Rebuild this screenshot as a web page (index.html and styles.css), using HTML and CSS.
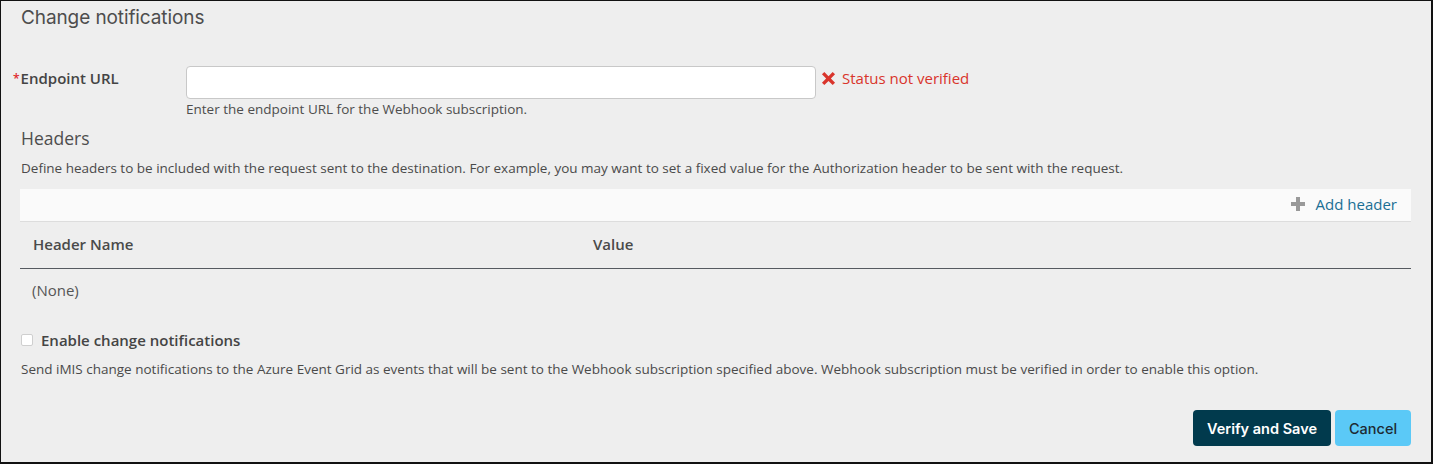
FILE: index.html
```html
<!DOCTYPE html>
<html>
<head>
<meta charset="utf-8">
<link rel="stylesheet" href="styles.css">
</head>
<body>
<div class="frame">
  <h1 class="title">Change notifications</h1>

  <div class="field-row">
    <label class="field-label"><span class="req">*</span>Endpoint URL</label>
    <div class="field-body">
      <div class="input-line">
        <input class="text-input" type="text">
        <span class="status">
          <svg class="x-icon" viewBox="0 0 16 16" width="16" height="16"><path d="M2.5 4.5 L4.5 2.5 L8 6 L11.5 2.5 L13.5 4.5 L10 8 L13.5 11.5 L11.5 13.5 L8 10 L4.5 13.5 L2.5 11.5 L6 8 Z" fill="#d9342b"/></svg>
          Status not verified
        </span>
      </div>
      <div class="help">Enter the endpoint URL for the Webhook subscription.</div>
    </div>
  </div>

  <h2 class="section">Headers</h2>
  <p class="desc">Define headers to be included with the request sent to the destination. For example, you may want to set a fixed value for the Authorization header to be sent with the request.</p>

  <div class="toolbar">
    <a class="add-link">
      <svg class="plus" viewBox="0 0 14 14" width="14" height="14"><path d="M5 0h4v5h5v4H9v5H5V9H0V5h5z" fill="#999"/></svg>
      Add header
    </a>
  </div>

  <table class="grid">
    <thead>
      <tr><th class="col-name">Header Name</th><th>Value</th></tr>
    </thead>
    <tbody>
      <tr><td colspan="2" class="none">(None)</td></tr>
    </tbody>
  </table>

  <label class="check-row">
    <span class="checkbox"></span>
    <span class="check-label">Enable change notifications</span>
  </label>
  <p class="desc desc2">Send iMIS change notifications to the Azure Event Grid as events that will be sent to the Webhook subscription specified above. Webhook subscription must be verified in order to enable this option.</p>

  <div class="actions">
    <button class="btn btn-primary">Verify and Save</button>
    <button class="btn btn-secondary">Cancel</button>
  </div>
</div>
</body>
</html>
```

FILE: styles.css
```css
* { box-sizing: border-box; }
html, body { margin: 0; padding: 0; }
body {
  width: 1433px;
  height: 464px;
  font-family: "Open Sans", "Liberation Sans", sans-serif;
  color: #4a4a4a;
}
.frame {
  width: 1433px;
  height: 464px;
  background: #eeeeee;
  border: 1px solid #111;
  border-right-width: 2px;
  border-bottom-width: 2px;
  padding: 0 20px 0 19px;
  overflow: hidden;
}
.title {
  font-family: Inter, "Liberation Sans", sans-serif;
  font-weight: 400;
  font-size: 19px;
  line-height: 24px;
  color: #4d4d4d;
  margin: 5px 0 0 1px;
  letter-spacing: -0.1px;
}
.field-row {
  display: flex;
  margin-top: 36px;
}
.field-label {
  width: 166px;
  font-weight: 600;
  font-size: 15px;
  line-height: 20px;
  color: #444;
  padding-top: 2px;
  margin-left: -7px;
  margin-right: 7px;
}
.req {
  color: #e0262b;
  font-size: 12px;
  margin-right: 1px;
  vertical-align: 1px;
}
.field-body { display: flex; flex-direction: column; }
.input-line { display: flex; align-items: center; }
.text-input {
  width: 630px;
  height: 33px;
  background: #fff;
  border: 1px solid #c8c8c8;
  border-radius: 4px;
  margin: 0;
  font: inherit;
}
.status {
  display: flex;
  align-items: center;
  gap: 4px;
  margin-left: 3px;
  color: #d9342b;
  font-size: 15px;
  line-height: 20px;
  margin-top: -9px;
}
.x-icon { display: block; width: 19px; height: 19px; }
.help {
  font-size: 13.5px;
  line-height: 18px;
  color: #4d4d4d;
  margin-top: 1px;
}
.section {
  font-family: "Open Sans", "Liberation Sans", sans-serif;
  font-weight: 400;
  font-size: 17.5px;
  line-height: 22px;
  color: #4d4d4d;
  margin: 9px 0 0 1px;
}
.desc {
  font-size: 13.5px;
  line-height: 18px;
  color: #4a4a4a;
  margin: 10px 0 0 1px;
}
.toolbar {
  display: flex;
  justify-content: flex-end;
  align-items: center;
  height: 33px;
  background: #fafafa;
  border-bottom: 1px solid #dddddd;
  margin-top: 12px;
  padding-right: 14px;
}
.add-link {
  display: flex;
  align-items: center;
  gap: 11px;
  color: #1b6f94;
  font-size: 15px;
  line-height: 20px;
  margin-top: -3px;
}
.plus { display: block; }
.grid {
  width: 100%;
  border-collapse: collapse;
  margin-top: 0;
}
.grid th {
  text-align: left;
  font-weight: 600;
  font-size: 15px;
  line-height: 20px;
  color: #4a4a4a;
  height: 46px;
  padding: 0 12px 1px;
  border-bottom: 1px solid #555a60;
}
.grid th.col-name { width: 561px; padding-left: 13px; }
.grid td.none {
  height: 46px;
  padding: 0 12px 2px;
  font-size: 15px;
  line-height: 20px;
  color: #555;
}
.check-row {
  display: flex;
  align-items: center;
  gap: 8px;
  margin-top: 16px;
  margin-left: 1px;
}
.checkbox {
  width: 12px;
  height: 12px;
  background: #fff;
  border: 1px solid #cfcfcf;
  border-radius: 2px;
}
.check-label {
  font-weight: 600;
  font-size: 15px;
  line-height: 20px;
  color: #444;
}
.desc2 { margin-top: 10px; }
.actions {
  display: flex;
  justify-content: flex-end;
  gap: 4px;
  margin-top: 32px;
}
.btn {
  height: 36px;
  border: none;
  border-radius: 4px;
  font-family: Inter, "Liberation Sans", sans-serif;
  font-size: 14.5px;
  padding: 0;
  cursor: pointer;
}
.btn-primary {
  background: #013a4d;
  color: #fff;
  font-weight: 600;
  width: 138px;
}
.btn-secondary {
  background: #5bc9f7;
  color: #1e2a32;
  font-weight: 500;
  width: 76px;
}
```
